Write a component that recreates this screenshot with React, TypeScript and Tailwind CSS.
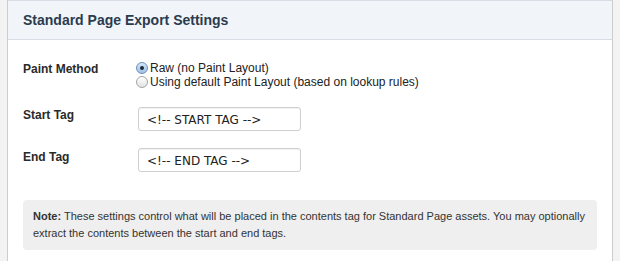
import React from 'react'

const font = { fontFamily: '"Liberation Sans", Arial, sans-serif' }

function Radio({ checked, label }: { checked?: boolean; label: string }) {
  return (
    <div className="flex items-center h-[14px] leading-[14px]">
      <span
        className={
          checked
            ? 'w-[12px] h-[12px] rounded-full border border-[#6e8fb5] bg-gradient-to-b from-[#d6e6f7] to-[#9fc2e8] flex items-center justify-center mr-[2px] ml-[-1px]'
            : 'w-[12px] h-[12px] rounded-full border border-[#a5a5a5] bg-gradient-to-b from-[#ffffff] to-[#e3e3e3] mr-[2px] ml-[-1px]'
        }
      >
        {checked && <span className="w-[4px] h-[4px] rounded-full bg-[#1d2a3a]" />}
      </span>
      <span className="text-[12px] text-[#222]">{label}</span>
    </div>
  )
}

function TagInput({ value }: { value: string }) {
  return (
    <div
      className="w-[163px] h-[24px] border border-[#cfcfcf] rounded-[3px] bg-white shadow-[inset_0_1px_1px_rgba(0,0,0,0.06)] flex items-center pl-[8px] pt-[2px] text-[12px] text-[#222]"
      style={{ fontFamily: '"DejaVu Sans", Verdana, sans-serif' }}
    >
      {value}
    </div>
  )
}

export default function App() {
  return (
    <div className="w-[620px] h-[261px] bg-[#f3f3f3] px-[7px] overflow-hidden" style={font}>
      <div className="h-full bg-white border-x border-[#cdcdcd]">
        <div className="h-[40px] bg-[#f1f5fa] border-y border-[#d6dde6] flex items-center px-[15px]">
          <h1 className="text-[14px] font-bold text-[#2c3b4e] mt-[1px]">Standard Page Export Settings</h1>
        </div>

        <div className="px-[15px] pt-[21px]">
          <div className="flex">
            <div className="w-[114px] text-[12px] font-bold text-[#2a2a2a] leading-[14px] pt-[1px]">Paint Method</div>
            <div className="flex flex-col">
              <Radio checked label="Raw (no Paint Layout)" />
              <Radio label="Using default Paint Layout (based on lookup rules)" />
            </div>
          </div>

          <div className="flex items-start mt-[18px]">
            <div className="w-[115px] text-[12px] font-bold text-[#2a2a2a] leading-[14px] pt-[1px]">Start Tag</div>
            <TagInput value="<!-- START TAG -->" />
          </div>

          <div className="flex items-start mt-[17px]">
            <div className="w-[115px] text-[12px] font-bold text-[#2a2a2a] leading-[14px] pt-[2px]">End Tag</div>
            <TagInput value="<!-- END TAG -->" />
          </div>

          <div className="mt-[28px] w-[574px] h-[50px] bg-[#efefef] rounded-[4px] px-[10px] pt-[8px] text-[11px] leading-[17px] text-[#333]">
            <b>Note:</b> These settings control what will be placed in the contents tag for Standard Page assets. You may optionally
            extract the contents between the start and end tags.
          </div>
        </div>
      </div>
    </div>
  )
}
